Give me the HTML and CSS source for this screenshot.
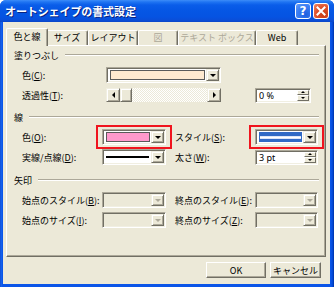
FILE: index.html
```html
<!DOCTYPE html>
<html lang="ja">
<head>
<meta charset="utf-8">
<title>オートシェイプの書式設定</title>
<link rel="stylesheet" href="styles.css">
</head>
<body>
<div class="window">
  <div class="titlebar">
    <span class="title">オートシェイプの書式設定</span>
    <div class="tb-buttons">
      <span class="tb-btn help">?</span>
      <span class="tb-btn close"><svg width="10" height="10" viewBox="0 0 10 10"><path d="M1.5 1.5 L8.5 8.5 M8.5 1.5 L1.5 8.5" stroke="#fff" stroke-width="2" stroke-linecap="square"/></svg></span>
    </div>
  </div>
  <div class="client">
    <div class="tabs">
      <div class="tab active w42">色と線</div>
      <div class="tab w42">サイズ</div>
      <div class="tab w50">レイアウト</div>
      <div class="tab w40 disabled">図</div>
      <div class="tab w78 disabled">テキスト ボックス</div>
      <div class="tab w42">Web</div>
    </div>
    <div class="panel">
      <div class="group g1">
        <div class="group-head"><span>塗りつぶし</span><i class="rule"></i></div>
        <div class="row fill">
          <span class="label">色(<u>C</u>):</span>
          <div class="combo">
            <div class="combo-field"><span class="swatch peach"></span></div>
            <span class="arrow-btn"><i class="tri-down"></i></span>
          </div>
        </div>
        <div class="row fill">
          <span class="label">透過性(<u>T</u>):</span>
          <div class="scrollbar">
            <span class="arrow-btn sq"><i class="tri-left"></i></span>
            <span class="thumb"></span>
            <span class="track"></span>
            <span class="arrow-btn sq"><i class="tri-right"></i></span>
          </div>
          <span></span>
          <div class="spin w56">
            <span class="spin-text">0 %</span>
            <span class="spin-btns"><span class="sbtn"><i class="tri-up-s"></i></span><span class="sbtn"><i class="tri-down-s"></i></span></span>
          </div>
        </div>
      </div>

      <div class="group g2">
        <div class="group-head"><span>線</span><i class="rule"></i></div>
        <div class="row">
          <span class="label">色(<u>O</u>):</span>
          <div class="combo marked">
            <div class="combo-field"><span class="swatch pink"></span></div>
            <span class="arrow-btn"><i class="tri-down"></i></span>
          </div>
          <span></span>
          <span class="label">スタイル(<u>S</u>):</span>
          <div class="combo marked">
            <div class="combo-field"><span class="style-sel"><i class="style-line"></i></span></div>
            <span class="arrow-btn"><i class="tri-down"></i></span>
          </div>
        </div>
        <div class="row">
          <span class="label">実線/点線(<u>D</u>):</span>
          <div class="combo">
            <div class="combo-field"><span class="dash-line"></span></div>
            <span class="arrow-btn"><i class="tri-down"></i></span>
          </div>
          <span></span>
          <span class="label">太さ(<u>W</u>):</span>
          <div class="spin">
            <span class="spin-text">3 pt</span>
            <span class="spin-btns"><span class="sbtn"><i class="tri-up-s"></i></span><span class="sbtn"><i class="tri-down-s"></i></span></span>
          </div>
        </div>
      </div>

      <div class="group g3">
        <div class="group-head"><span>矢印</span><i class="rule"></i></div>
        <div class="row">
          <span class="label">始点のスタイル(<u>B</u>):</span>
          <div class="combo off">
            <div class="combo-field"></div>
            <span class="arrow-btn"><i class="tri-down"></i></span>
          </div>
          <span></span>
          <span class="label">終点のスタイル(<u>E</u>):</span>
          <div class="combo off">
            <div class="combo-field"></div>
            <span class="arrow-btn"><i class="tri-down"></i></span>
          </div>
        </div>
        <div class="row">
          <span class="label">始点のサイズ(<u>I</u>):</span>
          <div class="combo off">
            <div class="combo-field"></div>
            <span class="arrow-btn"><i class="tri-down"></i></span>
          </div>
          <span></span>
          <span class="label">終点のサイズ(<u>Z</u>):</span>
          <div class="combo off">
            <div class="combo-field"></div>
            <span class="arrow-btn"><i class="tri-down"></i></span>
          </div>
        </div>
      </div>
    </div>
    <div class="buttons">
      <button class="btn ok">OK</button>
      <button class="btn cancel">キャンセル</button>
    </div>
  </div>
</div>
</body>
</html>
```

FILE: styles.css
```css
* { box-sizing: border-box; margin: 0; padding: 0; }
html, body { width: 334px; height: 287px; overflow: hidden; }
body {
  margin: 0;
  font-family: "Noto Sans CJK JP", "Noto Sans", sans-serif;
  font-size: 9px;
  line-height: 1;
  color: #000;
  background: #fff;
}
u { text-decoration: underline; text-underline-offset: 1px; }

.window {
  width: 334px;
  height: 287px;
  display: flex;
  flex-direction: column;
  background: linear-gradient(to right, #0A3EC8 0, #1C6BF0 1px, #0A55E8 2px, #0A55E8 331px, #0043CF 333px, #00309E 334px);
  border-radius: 6px 6px 0 0;
  overflow: hidden;
}

.titlebar {
  height: 22px;
  flex: none;
  display: flex;
  align-items: center;
  padding-left: 5px;
  background: linear-gradient(#3D8DF8 0, #1F74F2 2px, #0A5DE9 5px, #0556E4 11px, #0553E2 17px, #0A4ED8 20px, #0A46C8 22px);
}
.title {
  color: #fff;
  font-weight: 700;
  font-size: 11px;
  letter-spacing: -0.1px;
  text-shadow: 1px 1px 0 #0A2380;
}
.tb-buttons {
  margin-left: auto;
  display: flex;
  gap: 2px;
  padding-right: 5px;
}
.tb-btn {
  width: 16px;
  height: 16px;
  border: 1px solid #fff;
  border-radius: 3px;
  display: flex;
  align-items: center;
  justify-content: center;
  color: #fff;
  font-family: "DejaVu Sans", sans-serif;
  font-weight: 700;
  font-size: 12px;
}
.help { background: radial-gradient(circle at 70% 75%, #1E5FE0 0, #3D7FF3 60%, #6BA0F8 100%); }
.close { background: radial-gradient(circle at 70% 75%, #C43A12 0, #E0522E 55%, #F08A6A 100%); }

.client {
  flex: 1;
  margin: 0 4px 3px 3px;
  background: #ECE9D8;
  padding: 6px 0 0 3px;
  display: flex;
  flex-direction: column;
}

/* tabs */
.tabs {
  height: 17px;
  display: flex;
  align-items: flex-end;
  padding-left: 2px;
  position: relative;
  z-index: 1;
}
.tab {
  height: 15px;
  border-top: 1px solid #fff;
  border-left: 1px solid #fff;
  border-right: 1px solid #716F64;
  box-shadow: inset -1px 0 0 #ACA899;
  border-radius: 2px 2px 0 0;
  display: flex;
  align-items: center;
  justify-content: center;
  padding-bottom: 1px;
  background: #ECE9D8;
}
.tab.disabled { color: #ACA899; }
.tab.active {
  height: 18px;
  margin: 0 -2px -1px;
  position: relative;
  z-index: 2;
  padding-bottom: 3px;
}
.w40 { width: 40px; }
.w42 { width: 42px; }
.w50 { width: 50px; }
.w78 { width: 78px; }

/* panel */
.panel {
  width: 320px;
  height: 212px;
  border-top: 1px solid #fff;
  border-left: 1px solid #fff;
  border-right: 1px solid #716F64;
  border-bottom: 1px solid #716F64;
  box-shadow: inset -1px -1px 0 #ACA899;
  padding: 3px 6px 0 7px;
}
.group-head {
  height: 12px;
  display: flex;
  align-items: center;
  gap: 6px;
  margin-bottom: 4px;
}
.rule {
  flex: 1;
  height: 2px;
  border-top: 1px solid #ACA899;
  border-bottom: 1px solid #fff;
}
.g2 { margin-top: 6px; }
.g3 { margin-top: 7px; }

.row {
  height: 20px;
  display: grid;
  grid-template-columns: 80px 64px 9px 80px 63px;
  align-items: center;
  padding-left: 8px;
}
.row.fill { grid-template-columns: 84px 115px 34px 56px; }
.label { white-space: nowrap; }

/* combo box */
.combo {
  height: 16px;
  display: flex;
  border-top: 1px solid #ACA899;
  border-left: 1px solid #ACA899;
  border-right: 1px solid #fff;
  border-bottom: 1px solid #fff;
  box-shadow: inset 1px 1px 0 #716F64, inset -1px -1px 0 #F1EFE2;
  padding: 1px;
  background: #fff;
  position: relative;
}
.combo.off { background: #ECE9D8; }
.combo.marked::after {
  content: "";
  position: absolute;
  inset: -5px -7px;
  border: 2px solid #F0141E;
  pointer-events: none;
}
.combo-field {
  flex: 1;
  padding: 1px 1px 1px 2px;
  display: flex;
}
.swatch {
  flex: 1;
  border: 1px solid #5A5A5A;
}
.peach { background: #FEE9D0; }
.pink { background: #FF99CC; }
.style-sel {
  flex: 1;
  background: #316AC5;
  display: flex;
  align-items: center;
  padding: 0 1px;
}
.style-line {
  flex: 1;
  height: 3px;
  background: #fff;
  border-top: 1px solid #DCE6F8;
  border-bottom: 1px solid #DCE6F8;
}
.dash-line {
  flex: 1;
  align-self: center;
  height: 2px;
  background: #000;
  margin-right: 1px;
}

.arrow-btn {
  width: 13px;
  flex: none;
  background: #ECE9D8;
  border-top: 1px solid #F1EFE2;
  border-left: 1px solid #F1EFE2;
  border-right: 1px solid #716F64;
  border-bottom: 1px solid #716F64;
  box-shadow: inset 1px 1px 0 #fff, inset -1px -1px 0 #ACA899;
  display: flex;
  align-items: center;
  justify-content: center;
}
.tri-down {
  width: 0; height: 0;
  border-left: 3px solid transparent;
  border-right: 3px solid transparent;
  border-top: 3px solid #000;
}
.off .tri-down { border-top-color: #ACA899; }
.tri-left {
  width: 0; height: 0;
  border-top: 3px solid transparent;
  border-bottom: 3px solid transparent;
  border-right: 3px solid #000;
}
.tri-right {
  width: 0; height: 0;
  border-top: 3px solid transparent;
  border-bottom: 3px solid transparent;
  border-left: 3px solid #000;
}
.tri-up-s {
  width: 0; height: 0;
  border-left: 2px solid transparent;
  border-right: 2px solid transparent;
  border-bottom: 2px solid #000;
}
.tri-down-s {
  width: 0; height: 0;
  border-left: 2px solid transparent;
  border-right: 2px solid transparent;
  border-top: 2px solid #000;
}

/* scrollbar */
.scrollbar {
  height: 14px;
  display: flex;
}
.arrow-btn.sq { width: 14px; }
.thumb {
  width: 12px;
  background: #ECE9D8;
  border-top: 1px solid #F1EFE2;
  border-left: 1px solid #F1EFE2;
  border-right: 1px solid #716F64;
  border-bottom: 1px solid #716F64;
  box-shadow: inset 1px 1px 0 #fff, inset -1px -1px 0 #ACA899;
}
.track {
  flex: 1;
  background-color: #F5F3EA;
  background-image: repeating-conic-gradient(#fff 0 25%, #ECE9D8 0 50%);
  background-size: 2px 2px;
}

/* spinner */
.spin {
  height: 15px;
  display: flex;
  background: #fff;
  border-top: 1px solid #ACA899;
  border-left: 1px solid #ACA899;
  border-right: 1px solid #fff;
  border-bottom: 1px solid #fff;
  box-shadow: inset 1px 1px 0 #716F64, inset -1px -1px 0 #F1EFE2;
  padding: 1px;
}
.w56 { width: 56px; }
.spin-text {
  flex: 1;
  display: flex;
  align-items: center;
  padding-left: 2px;
  font-family: "Noto Sans", sans-serif;
  font-size: 9px;
}
.spin-btns {
  width: 12px;
  display: flex;
  flex-direction: column;
}
.sbtn {
  flex: 1;
  background: #ECE9D8;
  border-top: 1px solid #fff;
  border-left: 1px solid #fff;
  border-right: 1px solid #716F64;
  border-bottom: 1px solid #716F64;
  display: flex;
  align-items: center;
  justify-content: center;
}

/* dialog buttons */
.buttons {
  display: flex;
  gap: 4px;
  padding-left: 200px;
  margin-top: 5px;
}
.btn {
  height: 16px;
  font-family: "Noto Sans CJK JP", "Noto Sans", sans-serif;
  font-size: 9px;
  line-height: 1;
  color: #000;
  background: #ECE9D8;
  border-top: 1px solid #fff;
  border-left: 1px solid #fff;
  border-right: 1px solid #716F64;
  border-bottom: 1px solid #716F64;
  box-shadow: inset -1px -1px 0 #ACA899;
  display: flex;
  align-items: center;
  justify-content: center;
}
.ok { width: 60px; }
.cancel { width: 51px; }
```
